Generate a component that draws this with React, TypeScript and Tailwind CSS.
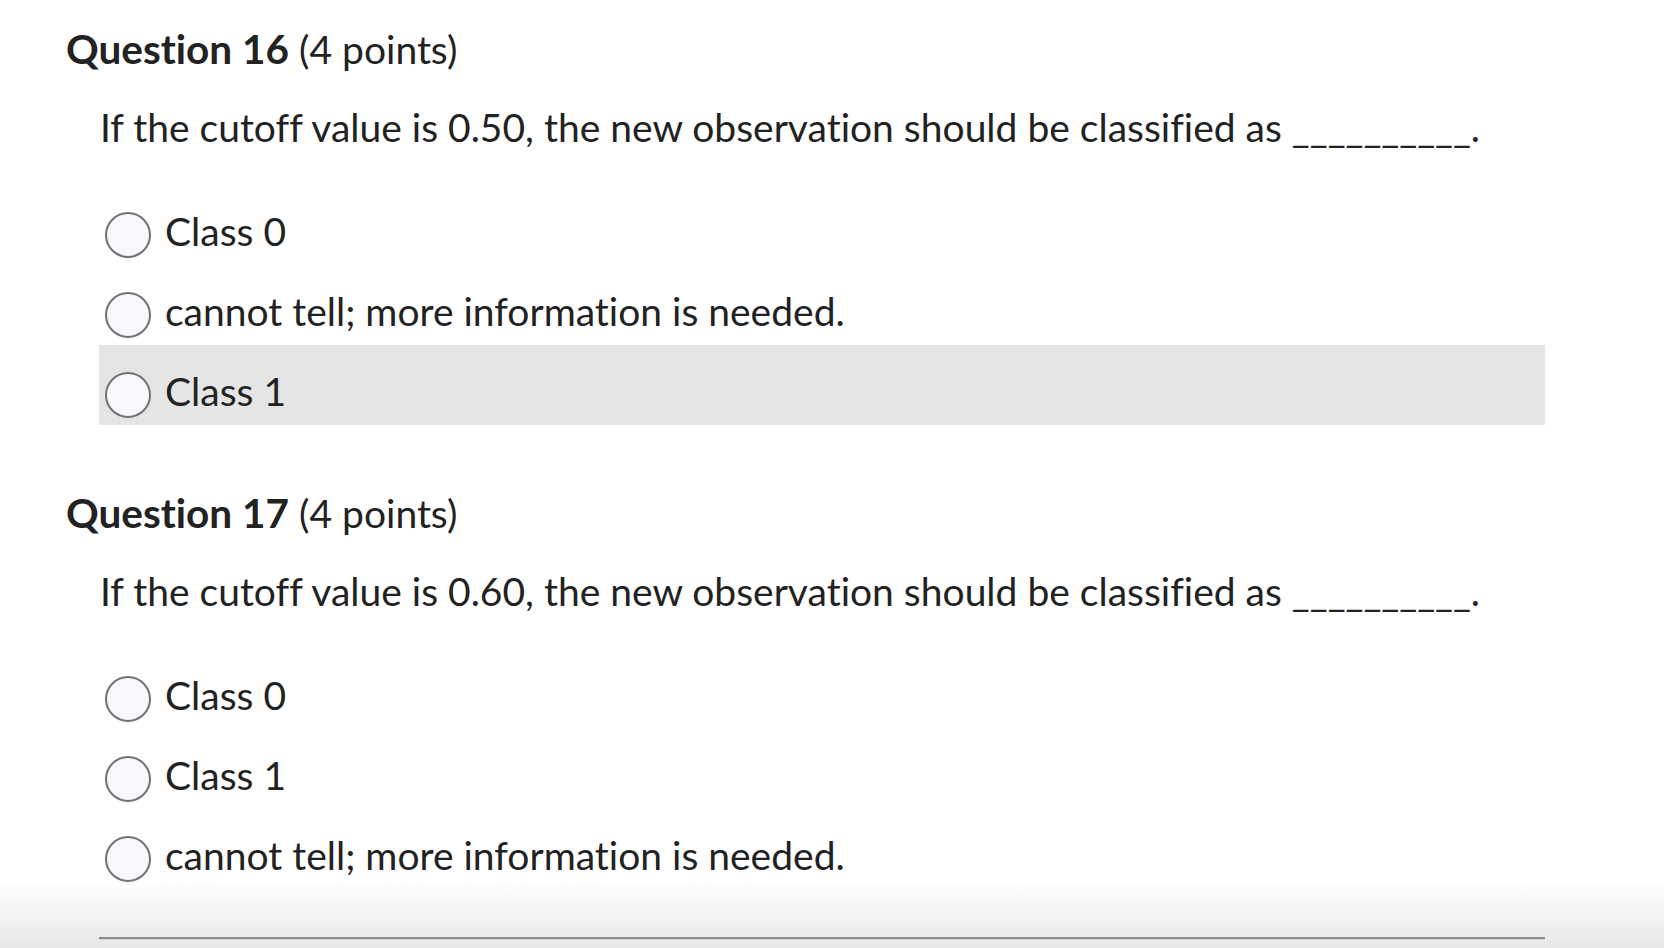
import React from 'react';

type Question = {
  number: number;
  points: number;
  prompt: string;
  options: string[];
  hovered?: number;
};

const questions: Question[] = [
  {
    number: 16,
    points: 4,
    prompt: 'If the cutoff value is 0.50, the new observation should be classified as __________.',
    options: ['Class 0', 'cannot tell; more information is needed.', 'Class 1'],
    hovered: 2,
  },
  {
    number: 17,
    points: 4,
    prompt: 'If the cutoff value is 0.60, the new observation should be classified as __________.',
    options: ['Class 0', 'Class 1', 'cannot tell; more information is needed.'],
  },
];

function QuestionBlock({ q }: { q: Question }) {
  return (
    <div>
      {/* header */}
      <h2 className="h-[48px] flex items-center leading-[48px] text-[#222222]">
        <span className="font-bold text-[40.5px]">Question {q.number}</span>
        <span className="ml-[10px] text-[39px]">({q.points} points)</span>
      </h2>

      {/* prompt */}
      <p className="mt-[29px] pl-[34px] text-[39px] leading-[50px] text-[#222222] whitespace-nowrap">{q.prompt}</p>

      {/* options */}
      <div className="mt-[33px] ml-[33px]">
        {q.options.map((opt, i) => (
          <label
            key={i}
            className={`h-[80px] pt-[20px] flex items-center gap-[14px] pl-[6px] ${
              q.hovered === i ? 'bg-[#e5e5e5]' : ''
            }`}
          >
            <span className="w-[46px] h-[46px] rounded-full border-2 border-[#6f7275] bg-[#f8f9fd] shrink-0" />
            <span className="mb-[8px] text-[39px] leading-[46px] text-[#222222]">{opt}</span>
          </label>
        ))}
      </div>
    </div>
  );
}

export default function App() {
  return (
    <div
      className="relative h-[948px] overflow-hidden bg-white [font-variant-ligatures:none]"
      style={{ fontFamily: 'Lato, "Noto Sans", sans-serif' }}
    >
      <div className="pl-[66px] pr-[119px] pt-[25px] flex flex-col gap-[64px]">
        {questions.map((q) => (
          <QuestionBlock key={q.number} q={q} />
        ))}
      </div>

      {/* footer fade */}
      <div className="absolute left-0 right-0 bottom-0 h-[70px] bg-gradient-to-b from-white/0 to-[#e8e8e8]">
        <div className="absolute left-[99px] right-[119px] bottom-[8px] h-[3px] bg-[#8c8c8c] border-b border-[#d5d5d5]" />
      </div>
    </div>
  );
}
